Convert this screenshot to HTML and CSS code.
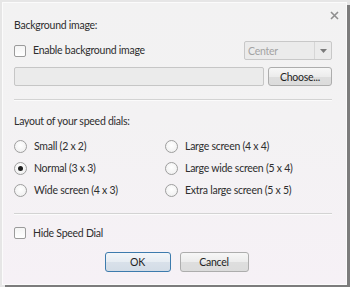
FILE: index.html
```html
<!DOCTYPE html>
<html>
<head>
<meta charset="utf-8">
<link rel="stylesheet" href="styles.css">
</head>
<body>
<div class="dialog">
  <span class="close" aria-label="Close">
    <svg width="9" height="9" viewBox="0 0 9 9"><path d="M1 1 L8 8 M8 1 L1 8" stroke="#8f8f8f" stroke-width="1.6" fill="none"/></svg>
  </span>
  <div class="heading first">Background image:</div>
  <div class="row row-enable">
    <label class="check"><span class="box"></span>Enable background image</label>
    <div class="select"><span class="select-text">Center</span><span class="select-arrow"><svg width="7" height="4" viewBox="0 0 7 4"><path d="M0 0 H7 L3.5 4 Z" fill="#7a7a7a"/></svg></span></div>
  </div>
  <div class="row row-file">
    <div class="field"></div>
    <div class="btn choose">Choose...</div>
  </div>
  <div class="sep sep1"></div>
  <div class="heading second">Layout of your speed dials:</div>
  <div class="radios">
    <label class="radio"><span class="dot"></span>Small (2 x 2)</label>
    <label class="radio"><span class="dot"></span>Large screen (4 x 4)</label>
    <label class="radio"><span class="dot checked"></span>Normal (3 x 3)</label>
    <label class="radio"><span class="dot"></span>Large wide screen (5 x 4)</label>
    <label class="radio"><span class="dot"></span>Wide screen (4 x 3)</label>
    <label class="radio"><span class="dot"></span>Extra large screen (5 x 5)</label>
  </div>
  <div class="sep sep2"></div>
  <label class="check hide"><span class="box"></span>Hide Speed Dial</label>
  <div class="buttons">
    <div class="btn ok">OK</div>
    <div class="btn cancel">Cancel</div>
  </div>
</div>
</body>
</html>
```

FILE: styles.css
```css
html, body {
  margin: 0;
  padding: 0;
}
body {
  width: 350px;
  height: 287px;
  background: #e6e6e6;
  font-family: Lato, "Liberation Sans", Arial, sans-serif;
  font-size: 10.5px;
  letter-spacing: -0.25px;
  color: #2e2e2e;
  overflow: hidden;
}
.dialog {
  position: relative;
  box-sizing: border-box;
  margin: 2px 0 0 2px;
  width: 345px;
  height: 283px;
  border: 1px solid #fbfbfb;
  background: linear-gradient(#f2f2f2, #f3f2f3 40%, #f6f1f6);
  box-shadow: 3px 3px 0 #7c7c7c;
  padding: 0 14px 0 11px;
  display: flex;
  flex-direction: column;
}
.close {
  position: absolute;
  right: 7px;
  top: 8px;
  width: 9px;
  height: 9px;
  display: block;
}
.close svg { display: block; }
.heading {
  line-height: 13px;
  height: 13px;
}
.heading.first { margin-top: 16px; }
.heading.second { margin-top: 14px; }
.row {
  display: flex;
  align-items: center;
}
.row-enable {
  margin-top: 9px;
  height: 19px;
}
.row-file {
  margin-top: 7px;
  height: 19px;
  gap: 4px;
}
.check, .radio {
  display: flex;
  align-items: center;
  gap: 7px;
  line-height: 13px;
}
.box {
  box-sizing: border-box;
  width: 12px;
  height: 12px;
  border: 1px solid #9b9b9b;
  border-radius: 2px;
  background: linear-gradient(#f4f4f4, #ffffff);
}
.select {
  box-sizing: border-box;
  margin-left: auto;
  width: 88px;
  height: 19px;
  border: 1px solid #c8c8c8;
  border-radius: 2px;
  background: #ebebeb;
  display: flex;
  align-items: center;
  color: #a3a3a3;
}
.select-text {
  flex: 1;
  padding-left: 3px;
}
.select-arrow {
  width: 16px;
  height: 17px;
  border-left: 1px solid #d6d6d6;
  display: flex;
  align-items: center;
  justify-content: center;
}
.select-arrow svg { display: block; }
.field {
  box-sizing: border-box;
  width: 250px;
  height: 19px;
  border: 1px solid #c6c6c6;
  border-radius: 2px;
  background: #ebebeb;
}
.btn {
  box-sizing: border-box;
  height: 19px;
  border: 1px solid #adadad;
  border-radius: 3px;
  background: linear-gradient(#f7f7f7, #ececec 50%, #dedede 51%, #dcdcdc);
  display: flex;
  align-items: center;
  justify-content: center;
  color: #1e1e1e;
}
.choose { width: 64px; }
.sep {
  height: 1px;
  background: #d3d3d3;
  border-bottom: 1px solid #fbfbfb;
}
.sep1 { margin-top: 13px; }
.sep2 { margin-top: 12px; }
.radios {
  margin-top: 7px;
  display: grid;
  grid-template-columns: 151px 1fr;
  grid-auto-rows: 22px;
}
.dot {
  box-sizing: border-box;
  width: 13px;
  height: 13px;
  border: 1px solid #9e9e9e;
  border-radius: 50%;
  background: radial-gradient(circle at 50% 40%, #ffffff, #ececec);
  display: flex;
  align-items: center;
  justify-content: center;
}
.dot.checked::after {
  content: "";
  width: 5px;
  height: 5px;
  border-radius: 50%;
  background: #1e1e1e;
}
.hide {
  margin-top: 11px;
  height: 14px;
}
.buttons {
  margin-top: 12px;
  display: flex;
  justify-content: center;
  gap: 9px;
  padding-left: 7px;
}
.ok, .cancel { height: 20px; }
.ok {
  width: 66px;
  border-color: #3d7bad;
  background: linear-gradient(#f3f6f9, #e6ecf2 50%, #d9e1ea 51%, #d3dce6);
}
.cancel { width: 69px; }
```
